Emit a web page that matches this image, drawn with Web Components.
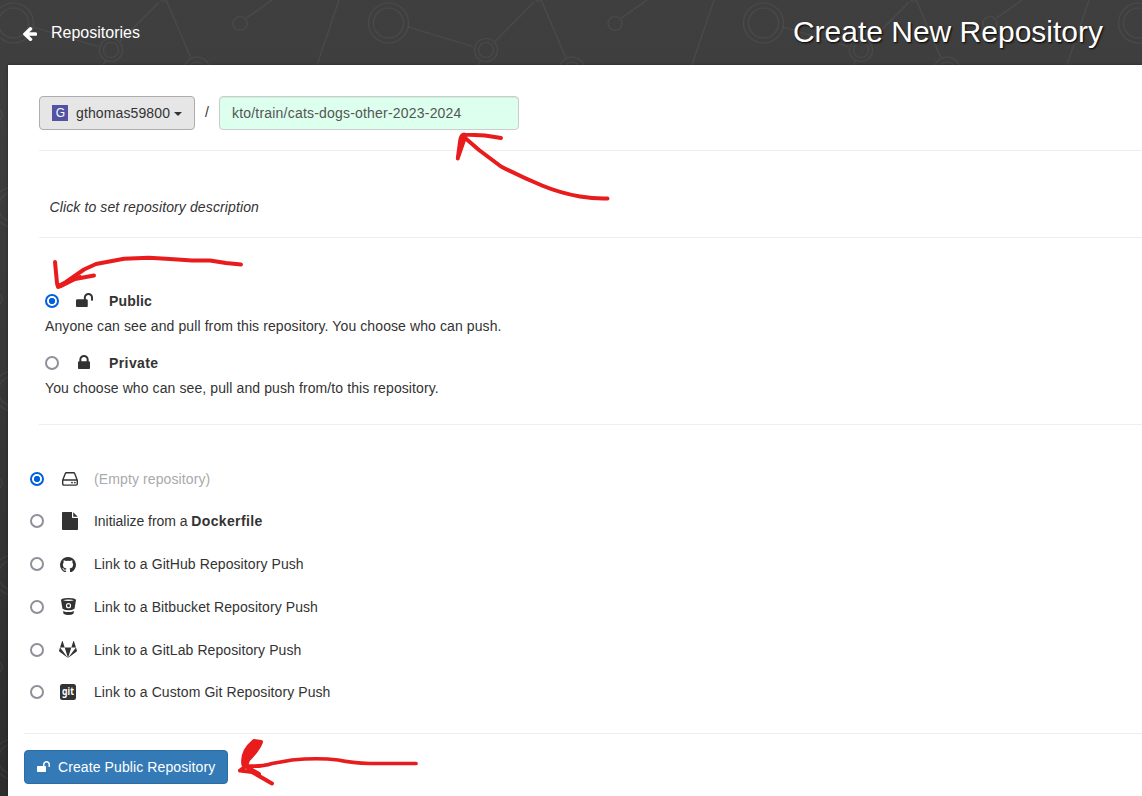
<!DOCTYPE html>
<html lang="en">
<head>
<meta charset="utf-8">
<title>Create New Repository</title>
<style>
html,body{margin:0;height:100%;overflow:hidden}
body{font:14px/20px "Liberation Sans",Arial,sans-serif;color:#333}
</style>
</head>
<body>
<quay-page></quay-page>
<script>
const define = (name, html, setup) => {
  const t = document.createElement('template');
  t.innerHTML = html;
  customElements.define(name, class extends HTMLElement {
    constructor() {
      super();
      this.attachShadow({mode: 'open'}).append(t.content.cloneNode(true));
    }
    connectedCallback() { if (setup) setup(this, this.shadowRoot); }
  });
};

const ICONS = {
  back: ['64 180 1472 1540', '<path fill="currentColor" d="M1536 896v128q0 53-32.500 90.500t-84.500 37.500h-704l293 294q38 36 38 90t-38 90l-75 76q-37 37-90 37-52 0-91-37l-651-652q-37-37-37-90 0-52 37-91l651-650q38-38 91-38 52 0 90 38l75 74q38 38 38 91t-38 91l-293 293h704q52 0 84.500 37.500t32.500 90.500z"/>'],
  unlock: ['0 128 1664 1408', '<path fill="currentColor" d="M1664 576v256q0 26-19 45t-45 19h-64q-26 0-45-19t-19-45V576q0-106-75-181t-181-75-181 75-75 181v192h96q40 0 68 28t28 68v576q0 40-28 68t-68 28H96q-40 0-68-28t-28-68V864q0-40 28-68t68-28h672V576q0-185 131.500-316.500T1216 128t316.500 131.500T1664 576z"/>'],
  lock: ['0 128 1152 1408', '<path fill="currentColor" d="M320 768h512V576q0-106-75-181t-181-75-181 75-75 181v192zm832 96v576q0 40-28 68t-68 28H96q-40 0-68-28t-28-68V864q0-40 28-68t68-28h32V576q0-184 132-316t316-132 316 132 132 316v192h32q40 0 68 28t28 68z"/>'],
  drive: ['0 0 16 14', '<path d="M.7 8.300 3.200 1.700Q3.500.8 4.500.8h7q1 0 1.300.9l2.500 6.600v3.500q0 1.300-1.300 1.300H2q-1.300 0-1.300-1.300zM.7 8h14.600" fill="none" stroke="currentColor" stroke-width="1.400"/><circle cx="10" cy="10.600" r=".9" fill="currentColor"/><circle cx="12.900" cy="10.600" r=".9" fill="currentColor"/>'],
  file: ['0 0 16 18', '<path d="M.8 0H10v5.200q0 .8.8.8H16v11.200q0 .8-.8.8H.8Q0 18 0 17.200V.8Q0 0 .8 0zM11.200.2 15.800 4.800H11.200z" fill="currentColor"/>'],
  github: ['0 128 1536 1504', '<path fill="currentColor" d="M768 128q209 0 385.500 103t279.500 279.500 103 385.500q0 251-146.500 451.500t-378.500 277.500q-27 5-40-7t-13-30q0-3 .5-76.500t.5-134.500q0-97-52-142 57-6 102.500-18t94-39 81-66.500 53-105 20.500-150.500q0-119-79-206 37-91-8-204-28-9-81 11t-92 44l-38 24q-93-26-192-26t-192 26q-16-11-42.500-27t-83.500-38.500-85-13.500q-45 113-8 204-79 87-79 206 0 85 20.500 150t52.500 105 80.500 67 94 39 102.500 18q-39 36-49 103-21 10-45 15t-57 5-65.500-21.500-55.500-62.500q-19-32-48.500-52t-49.500-24l-20-3q-21 0-29 4.500t-5 11.500 9 14 13 12l7 5q22 10 43.500 38t31.500 51l10 23q13 38 44 61.500t67 30 69.500 7 55.500-3.500l23-4q0 38 .5 88.500t.5 54.500q0 18-13 30t-40 7q-232-77-378.500-277.500t-146.500-451.500q0-209 103-385.500t279.500-279.500 385.500-103z"/>'],
  bitbucket: ['0 0 15 17', '<path fill="currentColor" fill-rule="evenodd" d="M0 2.100C0 .7 4 0 7.500 0S15 .7 15 2.100L13.500 10.800q-2.500 1.500-6 1.500T1.500 10.800zM2 2.200q2 .7 5.500.7T13 2.200Q11 1.500 7.500 1.500T2 2.200zM4.900 7.700a2.600 2.600 0 1 0 5.200 0 2.600 2.600 0 1 0-5.200 0zM2.100 12.900q5.400 2.400 10.800 0L12.500 15.700Q10.500 17 7.500 17T2.500 15.700z"/><circle cx="7.500" cy="7.700" r="1.450" fill="currentColor"/>'],
  gitlab: ['0 87 1792 1634', '<path fill="currentColor" d="M104 706l792 1015-868-630q-18-13-25-34.500t0-42.500l101-308zm462 0h660l-330 1015zM368 109l198 597h-462l198-597q8-22 33-22t33 22zm1320 597l101 308q7 21 0 42.500t-25 34.500l-868 630zm0 0h-462l198-597q8-22 33-22t33 22z"/>'],
  git: ['0 0 16 16', '<rect width="16" height="16" rx="2.500" fill="currentColor"/><text x="8" y="11.300" text-anchor="middle" textLength="12" lengthAdjust="spacingAndGlyphs" font-family="Noto Sans,sans-serif" font-weight="700" font-size="10.500" fill="#fff">git</text>']
};

define('quay-icon', `<style>:host{display:inline-flex;flex:none}svg{width:100%;height:100%;display:block}</style><svg preserveAspectRatio="none"></svg>`, (el, root) => {
  const [box, art] = ICONS[el.getAttribute('name')];
  const svg = root.querySelector('svg');
  svg.setAttribute('viewBox', box);
  svg.innerHTML = art;
});

define('quay-radio', `<style>
:host{display:block;flex:none;box-sizing:border-box;width:14px;height:14px;border:2px solid #8f8f9d;border-radius:50%;background:#fff}
:host([checked]){border-color:#0060df;background:radial-gradient(circle,#0060df 0 2.800px,#fff 3.500px)}
</style>`);

define('quay-backdrop', `<style>:host{position:absolute;inset:0;z-index:-1;background:linear-gradient(180deg,#3f3f3f 0,#3d3d3d 20%,#2d2d2d 100%)}svg{width:100%;height:100%;display:block}</style>
<svg><defs><pattern id="net" width="375" height="184" patternUnits="userSpaceOnUse">
<g fill="none" stroke="#fff" stroke-opacity=".055" stroke-width="1.200">
<circle cx="13.500" cy="23" r="20"/><circle cx="13.500" cy="23" r="15"/><circle cx="388.500" cy="23" r="20"/><circle cx="388.500" cy="23" r="15"/>
<path d="M33 27 98 46.500M120 41.500 159 2M167 2 190.500 57M246.500 18 272 0M339 0 317 65M105 61 94 90"/>
<circle cx="111" cy="50" r="11.500"/><circle cx="111" cy="50" r="7.500"/>
<circle cx="164" cy="-2" r="3.500"/><circle cx="240" cy="23.500" r="7"/>
<circle cx="197" cy="70" r="13"/><circle cx="197" cy="70" r="8"/>
<circle cx="-4" cy="115" r="6"/><circle cx="371" cy="115" r="6"/>
</g></pattern></defs><rect width="100%" height="100%" fill="url(#net)"/></svg>`);

define('quay-header', `<style>
:host{display:flex;justify-content:space-between;align-items:center;height:65px;box-sizing:border-box;padding:0 39px 0 23px;color:#fff}
.back{display:flex;align-items:center;gap:14px;font-size:16px}
quay-icon{width:14px;height:14px;margin-top:3px}
h1{margin:0;font-weight:400;font-size:30px;line-height:34px;text-shadow:1px 1px 2px #000;padding-bottom:1px}
</style><div class="back"><quay-icon name="back"></quay-icon><span>Repositories</span></div><h1>Create New Repository</h1>`);

define('namespace-picker', `<style>
:host{display:flex;align-items:center;box-sizing:border-box;width:156px;height:34px;border:1px solid #adadad;border-radius:4px;background:#e6e6e6;padding-left:12px;letter-spacing:.12px}
.avatar{width:16px;height:16px;background:#5254a3;color:#fff;font-size:12px;line-height:17px;text-align:center;margin-right:8px;text-indent:1px}
.caret{border:4px solid transparent;border-top-color:#333;border-bottom:0;margin-left:4px;margin-top:2px}
</style><span class="avatar">G</span><slot></slot><i class="caret"></i>`);

define('repo-name', `<style>
:host{display:flex;align-items:center;box-sizing:border-box;width:300px;height:34px;border:1px solid #ccc;border-radius:4px;background:#dfe;color:#555;padding:0 12px;box-shadow:inset 0 1px 1px rgba(0,0,0,.075);letter-spacing:.2px}
</style><slot></slot>`);

define('visibility-option', `<style>
:host{display:block;height:62px}
.head{display:flex;align-items:center;height:20px;font-weight:700;letter-spacing:var(--title-spacing,.15px)}
.ico{width:50px;display:flex;align-items:center;padding-left:17px;box-sizing:border-box;height:18px}
.ico quay-icon{width:17px;height:14px;margin-top:-3px}
:host([icon=lock]) quay-icon{width:12px;height:14px;margin-left:2px}
p{margin:5px 0 0;line-height:20px;letter-spacing:.1px}
</style><div class="head"><quay-radio></quay-radio><span class="ico"></span><slot name="title"></slot></div><p><slot></slot></p>`, (el, root) => {
  root.querySelector('quay-radio').toggleAttribute('checked', el.hasAttribute('checked'));
  root.querySelector('.ico').innerHTML = `<quay-icon name="${el.getAttribute('icon')}"></quay-icon>`;
});

define('source-option', `<style>
:host{display:flex;align-items:center;height:42.670px;letter-spacing:.085px}
:host([icon=file]){height:42px;letter-spacing:-.04px}
:host([icon=github]){padding-top:.67px}
:host([muted]){color:#aaa;letter-spacing:.11px}
.ico{width:50px;box-sizing:border-box;display:flex;justify-content:center;padding-right:2px;color:#333}
:host([wide]) .ico{padding:0 0 0 2px}
::slotted(b){letter-spacing:.35px}
</style><quay-radio></quay-radio><span class="ico"></span><span><slot></slot></span>`, (el, root) => {
  root.querySelector('quay-radio').toggleAttribute('checked', el.hasAttribute('checked'));
  const [w, h] = el.getAttribute('size').split(' ');
  root.querySelector('.ico').innerHTML = `<quay-icon name="${el.getAttribute('icon')}" style="width:${w}px;height:${h}px"></quay-icon>`;
});

define('create-button', `<style>
:host{display:flex;align-items:center;box-sizing:border-box;width:204px;height:34px;border:1px solid #2e6da4;border-radius:4px;background:#337ab7;color:#fff;padding-left:12px;letter-spacing:.1px}
quay-icon{width:13px;height:11px;margin-right:8px;margin-top:-1px}
</style><quay-icon name="unlock"></quay-icon><slot></slot>`);

define('pen-marks', `<style>:host{position:absolute;inset:0;pointer-events:none}svg{display:block}</style>
<svg width="1142" height="796" fill="none" stroke="#e81c1c" stroke-width="4" stroke-linecap="round" stroke-linejoin="round">
<path d="M607.500 198.500Q595 199 580 196.500 560 193 542 185.500 519 176 501 166.500L479 150 464 137"/>
<path d="M457.800 158.500 460 142Q461 134 464.500 134.500L485 135.500 501 138M458.500 156 465 137"/>
<path d="M241 264.500 226 263 210 260.500 192 260.500 170 259 149 257.800 124 258.800 96 264 84 269.500 66 282 58 287"/>
<path d="M55 262 57 283Q57 287 61 286L75 279 94 275.500M60 285 80 277"/>
<path d="M416 763.500 370 763.500Q352 763 338 760 318 757.500 292 760L272 763.500Q262 767 248 766" stroke-width="3.700"/>
<path d="M240 770.500 246 766M240 770.500 252 772 272 783.500M247 767 259 774"/>
<path d="M243.500 765Q241 752 254 741L261 742Q258 750 248 760L246 766z" fill="#e81c1c"/>
</svg>`);

define('quay-page', `<style>
:host{display:block;position:relative;z-index:0;width:1142px;height:796px;overflow:hidden}
main{box-sizing:border-box;margin-left:8px;height:731px;background:#fff;padding-left:31px;box-shadow:0 0 3px rgba(0,0,0,.35)}
section{box-sizing:border-box;border-bottom:1px solid #eee}
.name{display:flex;height:86px;padding-top:31px}
.slash{width:24px;text-align:center;line-height:32px}
.desc{height:87px;padding:46px 0 0 10.500px;font-style:italic;letter-spacing:.115px}
.vis{height:187px;padding:53px 0 0 6px}
.src{height:309px;margin-left:-15px;padding:32.700px 0 0 6px}
.foot{margin-left:-15px;padding-top:16px}
</style>
<quay-backdrop></quay-backdrop>
<quay-header></quay-header>
<main>
<section class="name"><namespace-picker>gthomas59800</namespace-picker><span class="slash">/</span><repo-name>kto/train/cats-dogs-other-2023-2024</repo-name></section>
<section class="desc">Click to set repository description</section>
<section class="vis">
<visibility-option icon="unlock" checked><span slot="title">Public</span>Anyone can see and pull from this repository. You choose who can push.</visibility-option>
<visibility-option icon="lock" style="--title-spacing:.4px"><span slot="title">Private</span>You choose who can see, pull and push from/to this repository.</visibility-option>
</section>
<section class="src">
<source-option icon="drive" size="16 14" wide muted checked>(Empty repository)</source-option>
<source-option icon="file" size="16 18" wide>Initialize from a <b>Dockerfile</b></source-option>
<source-option icon="github" size="16 15.500">Link to a GitHub Repository Push</source-option>
<source-option icon="bitbucket" size="15 17">Link to a Bitbucket Repository Push</source-option>
<source-option icon="gitlab" size="18 17">Link to a GitLab Repository Push</source-option>
<source-option icon="git" size="16 16">Link to a Custom Git Repository Push</source-option>
</section>
<div class="foot"><create-button>Create Public Repository</create-button></div>
</main>
<pen-marks></pen-marks>`);
</script>
</body>
</html>
